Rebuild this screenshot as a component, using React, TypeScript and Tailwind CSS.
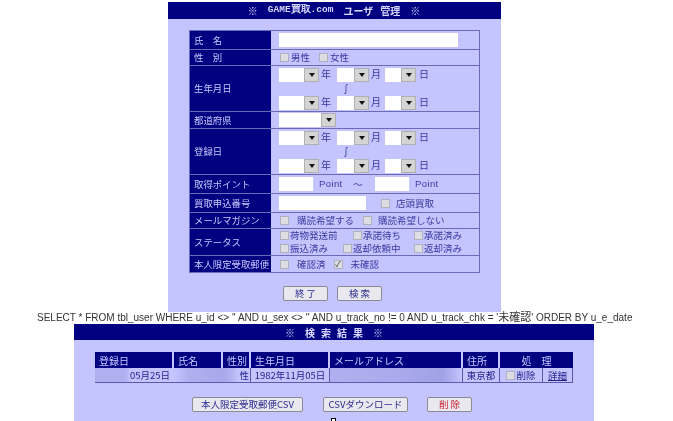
const font = { fontFamily: '"Noto Sans CJK JP", "Liberation Sans", sans-serif' };

function Check({ checked = false }: { checked?: boolean }) {
  return (
    <span className="inline-flex h-[9px] w-[9px] shrink-0 items-center justify-center border border-[#b0b0c0] bg-[#dedee2] text-[8px] leading-none text-[#333]">
      {checked ? "✓" : ""}
    </span>
  );
}

function Select({ w }: { w: string }) {
  return (
    <span className={`flex h-[14px] items-center bg-white ${w}`}>
      <span className="ml-auto flex h-[14px] w-[15px] items-center justify-center border border-[#b0b0b0] bg-[#d4d4d4]">
        <span className="h-0 w-0 border-x-[3px] border-t-[4px] border-x-transparent border-t-[#111]" />
      </span>
    </span>
  );
}

function DateRow() {
  return (
    <div className="flex h-[14px] items-center text-[10px] leading-[12px] text-[#3a3aa0]">
      <Select w="w-[40px]" />
      <span className="ml-[2px] w-[16px] self-start">年</span>
      <Select w="w-[32px]" />
      <span className="ml-[2px] w-[14px] self-start">月</span>
      <Select w="w-[31px]" />
      <span className="ml-[3px] self-start">日</span>
    </div>
  );
}

function DateRange() {
  return (
    <div className="flex flex-col pt-[2px]">
      <DateRow />
      <div className="h-[14px] pl-[62px] text-[10px] leading-[14px] text-[#3a3aa0]">∫</div>
      <DateRow />
    </div>
  );
}

function Row({ label, h, children }: { label: string; h: string; children: React.ReactNode }) {
  return (
    <div className={`flex border-b border-[#6a6ab8] last:border-b-0 ${h}`}>
      <div className="flex w-[83px] shrink-0 items-center border-r-2 border-[#c4c4ff] bg-[#000080] pl-[4px] text-[9.4px] whitespace-nowrap text-[#c8c8ff]">
        {label}
      </div>
      <div className="min-w-0 flex-1 pl-[6px] text-[9.5px] text-[#3a3aa0]">{children}</div>
    </div>
  );
}

function CheckLabel({ text, checked, gap = "gap-[8px]" }: { text: string; checked?: boolean; gap?: string }) {
  return (
    <span className={`flex items-center whitespace-nowrap ${gap}`}>
      <Check checked={checked} />
      {text}
    </span>
  );
}

function Btn({ children, w, red }: { children: React.ReactNode; w: string; red?: boolean }) {
  return (
    <button
      className={`flex h-[15px] items-center justify-center rounded-[2px] border border-[#8a8a96] bg-[#e8e8ee] text-[9.5px] leading-none whitespace-nowrap ${w} ${red ? "text-[#d02030]" : "text-[#2a2a90]"}`}
    >
      {children}
    </button>
  );
}

function ResultHead({ w, children, center }: { w: string; children: React.ReactNode; center?: boolean }) {
  return (
    <div className={`flex h-[16px] items-center border-r-2 border-[#c4c4ff] bg-[#000080] text-[10px] whitespace-pre text-[#c8c8ff] last:border-r-0 ${w} ${center ? "justify-center" : "pl-[4px]"}`}>
      {children}
    </div>
  );
}

function ResultCell({ w, children, className = "" }: { w: string; children?: React.ReactNode; className?: string }) {
  return (
    <div className={`flex h-[15px] items-center border-b border-[#5a5ab0] text-[9.5px] whitespace-nowrap text-[#24248c] ${w} ${className}`}>
      {children}
    </div>
  );
}

export default function App() {
  return (
    <div className="h-[421px] w-[673px] overflow-hidden bg-white blur-[0.5px]" style={font}>
      <div className="ml-[168px] w-[333px] pt-[2px]">
        <div className="h-[310px] bg-[#c4c4ff]">
          <div className="flex h-[17px] items-center justify-center gap-[10px] bg-[#000080] pr-[1px] text-[10px] font-bold text-[#d8d8ff]">
            <span>※</span>
            <span className="font-['Liberation_Mono'] text-[9.5px]">GAME買取.com</span>
            <span>ユーザ</span>
            <span className="-ml-[3px]">管理</span>
            <span>※</span>
          </div>
          <div className="mx-[21px] mt-[11px] w-[291px] border border-[#6a6ab8]">
            <Row label="氏　名" h="h-[19px]">
              <div className="mt-[2px] h-[14px] w-[179px] bg-white" />
            </Row>
            <Row label="性　別" h="h-[16px]">
              <div className="flex h-full items-center gap-[9px] pl-[1px]">
                <CheckLabel text="男性" gap="gap-[2px]" />
                <CheckLabel text="女性" gap="gap-[2px]" />
              </div>
            </Row>
            <Row label="生年月日" h="h-[46px]">
              <DateRange />
            </Row>
            <Row label="都道府県" h="h-[17px]">
              <div className="pt-[1px]">
                <Select w="w-[57px]" />
              </div>
            </Row>
            <Row label="登録日" h="h-[46px]">
              <DateRange />
            </Row>
            <Row label="取得ポイント" h="h-[19px]">
              <div className="flex h-full items-center font-['Liberation_Sans'] text-[9.5px] tracking-[0.4px]">
                <span className="h-[14px] w-[34px] bg-white" />
                <span className="ml-[6px] w-[34px]">Point</span>
                <span className="w-[22px] font-['Noto_Sans_CJK_JP']">～</span>
                <span className="h-[14px] w-[34px] bg-white" />
                <span className="ml-[6px]">Point</span>
              </div>
            </Row>
            <Row label="買取申込番号" h="h-[19px]">
              <div className="flex h-full items-center">
                <span className="h-[14px] w-[87px] bg-white" />
                <span className="ml-[15px]">
                  <CheckLabel text="店頭買取" gap="gap-[6px]" />
                </span>
              </div>
            </Row>
            <Row label="メールマガジン" h="h-[16px]">
              <div className="flex h-full items-center gap-[9px] pl-[1px]">
                <CheckLabel text="購読希望する" />
                <CheckLabel text="購読希望しない" gap="gap-[6px]" />
              </div>
            </Row>
            <Row label="ステータス" h="h-[27px]">
              <div className="flex h-full flex-col justify-center pl-[1px] leading-[13px]">
                <div className="flex">
                  <span className="w-[73px]"><CheckLabel text="荷物発送前" gap="gap-[1px]" /></span>
                  <span className="w-[61px]"><CheckLabel text="承諾待ち" gap="gap-[1px]" /></span>
                  <CheckLabel text="承諾済み" gap="gap-[1px]" />
                </div>
                <div className="flex">
                  <span className="w-[63px]"><CheckLabel text="振込済み" gap="gap-[1px]" /></span>
                  <span className="w-[71px]"><CheckLabel text="返却依頼中" gap="gap-[1px]" /></span>
                  <CheckLabel text="返却済み" gap="gap-[1px]" />
                </div>
              </div>
            </Row>
            <Row label="本人限定受取郵便" h="h-[16px]">
              <div className="flex h-full items-center gap-[8px] pl-[1px]">
                <CheckLabel text="確認済" />
                <CheckLabel text="未確認" checked />
              </div>
            </Row>
          </div>
          <div className="mt-[13px] flex justify-center gap-[9px] pr-[4px]">
            <Btn w="w-[45px]">終 了</Btn>
            <Btn w="w-[45px]">検 索</Btn>
          </div>
        </div>
      </div>

      <div className="relative z-10 ml-[37px] h-[12px] text-[10px] leading-[11px] whitespace-nowrap text-[#333]" style={{ fontFamily: '"Liberation Sans", "Noto Sans CJK JP", sans-serif' }}>
        {"SELECT * FROM tbl_user WHERE u_id <> '' AND u_sex <> '' AND u_track_no != 0 AND u_track_chk = '"}
        <span className="text-[11px]">未確認</span>
        {"' ORDER BY u_e_date"}
      </div>

      <div className="ml-[74px] h-[97px] w-[520px] bg-[#c4c4ff]">
        <div className="flex h-[16px] items-center justify-center gap-[6px] bg-[#000080] text-[10px] font-bold text-[#d8d8ff]">
          <span className="mr-[4px]">※</span>
          <span>検</span>
          <span>索</span>
          <span>結</span>
          <span>果</span>
          <span className="ml-[4px]">※</span>
        </div>
        <div className="mt-[12px] ml-[21px] w-[478px]">
          <div className="flex">
            <ResultHead w="w-[79px]">登録日</ResultHead>
            <ResultHead w="w-[49px]">氏名</ResultHead>
            <ResultHead w="w-[28px]">性別</ResultHead>
            <ResultHead w="w-[79px]">生年月日</ResultHead>
            <ResultHead w="w-[133px]">メールアドレス</ResultHead>
            <ResultHead w="w-[37px]">住所</ResultHead>
            <ResultHead w="w-[73px]" center>処　理</ResultHead>
          </div>
          <div className="flex">
            {/* blurred-out values in the screenshot */}
            <ResultCell w="w-[79px]" className="justify-end bg-[linear-gradient(90deg,#b0b0f0_0%,#b0b0f0_38%,#c4c4ff_46%)] pr-[4px]">05月25日</ResultCell>
            <ResultCell w="w-[49px]" className="bg-[linear-gradient(90deg,#c4c4ff_0%,#b0b0f0_30%,#a8a8ea_100%)]" />
            <ResultCell w="w-[28px]" className="justify-end border-r border-r-[#5a5ab0] bg-[linear-gradient(90deg,#a8a8ea_0%,#b4b4f2_35%,#c4c4ff_60%)] pr-[1px]">性</ResultCell>
            <ResultCell w="w-[79px]" className="justify-center border-r border-r-[#5a5ab0]">1982年11月05日</ResultCell>
            <ResultCell w="w-[133px]" className="border-r border-r-[#5a5ab0] bg-[linear-gradient(90deg,#b0b0f0_0%,#aaaaec_50%,#a0a0e6_85%,#c4c4ff_100%)]" />
            <ResultCell w="w-[37px]" className="justify-center border-r border-r-[#5a5ab0]">東京都</ResultCell>
            <ResultCell w="w-[43px]" className="justify-center gap-[1px] border-r border-r-[#5a5ab0]"><Check />削除</ResultCell>
            <ResultCell w="w-[30px]" className="justify-center border-r border-r-[#5a5ab0] text-[#2222cc] underline">詳細</ResultCell>
          </div>
        </div>
        <div className="mt-[14px] flex pl-[118px]">
          <Btn w="w-[111px]">本人限定受取郵便CSV</Btn>
          <span className="ml-[20px]"><Btn w="w-[85px]">CSVダウンロード</Btn></span>
          <span className="ml-[19px]"><Btn w="w-[45px]" red>削 除</Btn></span>
        </div>
        <div className="mt-[6px] ml-[257px] h-[4px] w-[5px] border border-b-0 border-black bg-white" />
      </div>
    </div>
  );
}
